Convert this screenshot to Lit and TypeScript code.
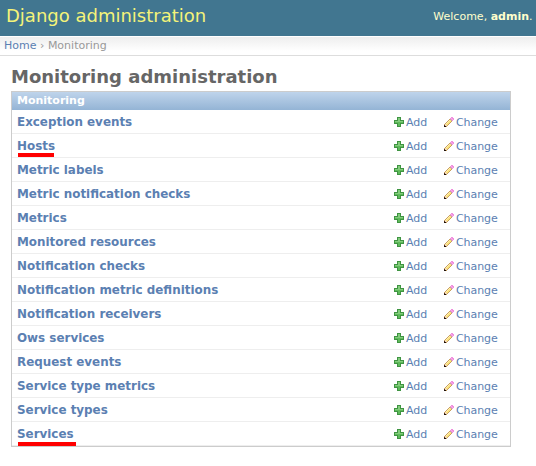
import { LitElement, html, css, svg } from "lit";
import { customElement, property } from "lit/decorators.js";

const addIcon = html`<svg class="icon" width="10" height="10" viewBox="0 0 10 10" shape-rendering="crispEdges">
  ${svg`<path fill="#3f9442" d="M3 0h4v3h3v4H7v3H3V7H0V3h3z"/>
  <path fill="#83cc7c" d="M4 1h2v3h3v1H1V4h3z"/>
  <path fill="#5fba5b" d="M1 5h8v1H6v3H4V6H1z"/>`}
</svg>`;

const changeIcon = html`<svg class="icon" width="10" height="10" viewBox="0 0 10 10" shape-rendering="crispEdges">
  ${svg`<path fill="#c9a060" d="M5 2h1v1H5zM4 3h1v1H4zM3 4h1v1H3zM2 5h1v1H2zM1 6h1v1H1zM0 7h1v1H0zM7 4h1v1H7zM6 5h1v1H6zM5 6h1v1H5zM4 7h1v1H4zM3 8h1v1H3zM2 9h1v1H2z"/>
  <path fill="#fbe27a" d="M6 3h1v2H6zM5 4h1v2H5zM4 5h1v2H4zM3 6h1v2H3zM2 7h1v1H2z"/>
  <path fill="#fff0b0" d="M5 3h1v1H5zM4 4h1v1H4zM3 5h1v1H3zM2 6h1v1H2z"/>
  <path fill="#f1d8bd" d="M1 7h1v2H1zM2 8h1v1H2z"/>
  <path fill="#ef8edd" d="M7 0h2v1h1v2H9v1H8V3H7V2H6V1h1z"/>
  <path fill="#faade9" d="M7 1h1v1H7zM8 2h1v1H8z"/>
  <path fill="#c9a0a8" d="M6 2h1v1H6zM7 3h1v1H7z"/>
  <path fill="#4a2c18" d="M0 8h1v1H0z"/>
  <path fill="#20120a" d="M0 9h2v1H0z"/>`}
</svg>`;

@customElement("model-row")
class ModelRow extends LitElement {
  @property() name = "";
  @property({ type: Number }) mark = 0;

  static styles = css`
    :host { display: flex; box-sizing: border-box; height: 24px; border-bottom: 1px solid #eee; padding-left: 5px; line-height: 23px; color: #5b80b2; }
    .name { position: relative; flex: 1; height: 23px; line-height: 25px; font-size: 11.92px; font-weight: bold; }
    .action { display: flex; align-items: center; font-size: 11px; gap: 2px; }
    .add { width: 50px; }
    .change { width: 66px; letter-spacing: -0.08px; }
    .icon { display: block; flex: none; margin-top: 1px; }
    .label { padding-top: 1px; }
    .mark { position: absolute; left: 1px; bottom: 0; height: 4px; background: #f00; }
    :host(:last-child) .mark { bottom: -1px; }
  `;

  render() {
    return html`
      <div class="name">${this.name}${this.mark ? html`<span class="mark" style="width:${this.mark}px"></span>` : ""}</div>
      <div class="action add">${addIcon}<span class="label">Add</span></div>
      <div class="action change">${changeIcon}<span class="label">Change</span></div>
    `;
  }
}

const models: [string, number][] = [
  ["Exception events", 0],
  ["Hosts", 36],
  ["Metric labels", 0],
  ["Metric notification checks", 0],
  ["Metrics", 0],
  ["Monitored resources", 0],
  ["Notification checks", 0],
  ["Notification metric definitions", 0],
  ["Notification receivers", 0],
  ["Ows services", 0],
  ["Request events", 0],
  ["Service type metrics", 0],
  ["Service types", 0],
  ["Services", 58],
];

@customElement("app-root")
class AppRoot extends LitElement {
  static styles = css`
    :host { display: block; height: 466px; overflow: hidden; background: #fff; font-family: "DejaVu Sans", sans-serif; font-size: 11px; }
    .header { display: flex; justify-content: space-between; height: 36px; background: #417690; color: #ffc; }
    .brand { margin: 0; padding-left: 6px; font-size: 18px; font-weight: normal; line-height: 32px; color: #f4f379; }
    .user { padding-right: 3.5px; line-height: 33px; }
    .crumbs { box-sizing: border-box; height: 20px; border-top: 1px solid #fff; border-bottom: 1px solid #ddd; padding-left: 4px; line-height: 18px; color: #999; background: linear-gradient(#eee, #fff 14px); }
    .home { color: #5b80b2; }
    .title { margin: 10px 0 0 11px; height: 25px; line-height: 22px; font-size: 18px; font-weight: bold; color: #666; }
    .module { box-sizing: border-box; width: 500px; margin-left: 11px; border: 1px solid #ccc; }
    .caption { height: 18px; padding-left: 5px; line-height: 17px; font-weight: bold; color: #fff; background: linear-gradient(#bfd4eb, #94b4d5); }
  `;

  render() {
    return html`
      <div class="header">
        <h1 class="brand">Django administration</h1>
        <div class="user">Welcome, <b>admin</b>.</div>
      </div>
      <div class="crumbs"><span class="home">Home</span> › Monitoring</div>
      <h2 class="title">Monitoring administration</h2>
      <div class="module">
        <div class="caption">Monitoring</div>
        ${models.map(([name, mark]) => html`<model-row .name=${name} .mark=${mark}></model-row>`)}
      </div>
    `;
  }
}
